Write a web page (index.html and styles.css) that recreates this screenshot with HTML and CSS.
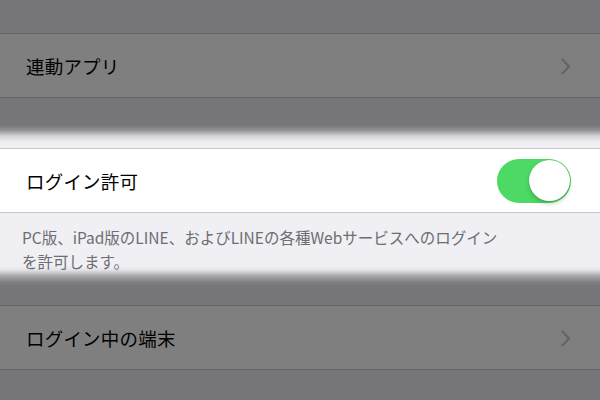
FILE: index.html
```html
<!DOCTYPE html>
<html lang="ja">
<head>
  <meta charset="UTF-8">
  <meta name="viewport" content="width=device-width, initial-scale=1.0">
  <title>ログイン許可</title>
  <link rel="stylesheet" href="styles.css">
</head>
<body>
  <div id="settings">
    <div class="gap top"></div>
    <div class="row">
      <div class="label">連動アプリ</div>
      <svg class="chevron" width="10" height="17" viewBox="0 0 10 17">
        <path d="M1.5 1.5 L8 8.5 L1.5 15.5" fill="none" stroke="#c7c7cc" stroke-width="2.2" stroke-linecap="round" stroke-linejoin="round"/>
      </svg>
    </div>
    <div class="gap mid"></div>
    <div class="row">
      <div class="label">ログイン許可</div>
      <div class="toggle on"><div class="knob"></div></div>
    </div>
    <div class="footer">PC版、iPad版のLINE、およびLINEの各種Webサービスへのログイン<br>を許可します。</div>
    <div class="row">
      <div class="label">ログイン中の端末</div>
      <svg class="chevron" width="10" height="17" viewBox="0 0 10 17">
        <path d="M1.5 1.5 L8 8.5 L1.5 15.5" fill="none" stroke="#c7c7cc" stroke-width="2.2" stroke-linecap="round" stroke-linejoin="round"/>
      </svg>
    </div>
    <div class="gap bottom"></div>
    <div id="shade"></div>
  </div>
</body>
</html>
```

FILE: styles.css
```css
*{
  margin: 0px;
  padding: 0px;
  box-sizing: border-box;
}
body{
  width: 600px;
  height: 400px;
  overflow: hidden;
  background-color: #efeff4;
  font-family: "Noto Sans CJK JP", "Noto Sans", sans-serif;
}
#settings{
  position: relative;
  width: 600px;
  height: 400px;
  display: flex;
  flex-direction: column;
}
.gap.top{
  height: 33px;
  flex: none;
}
.gap.mid{
  height: 50px;
  flex: none;
}
.gap.bottom{
  flex: 1;
}
.row{
  height: 65px;
  flex: none;
  background-color: #fff;
  border-top: 1px #c8c7cc solid;
  border-bottom: 1px #c8c7cc solid;
  display: flex;
  align-items: center;
  justify-content: space-between;
  padding: 0px 29px 0px 26px;
}
.label{
  font-size: 18.5px;
  color: #000;
  letter-spacing: 0.2px;
}
.chevron{
  margin-top: 1px;
}
.toggle{
  width: 74px;
  height: 44px;
  border-radius: 22px;
  background-color: #e5e5ea;
  position: relative;
}
.toggle.on{
  background-color: #4cd964;
}
.knob{
  position: absolute;
  top: 1.5px;
  right: 1.5px;
  width: 41px;
  height: 41px;
  border-radius: 50%;
  background-color: #fff;
  box-shadow: 0px 3px 4px rgba(0,0,0,0.18), 0px 0px 1px rgba(0,0,0,0.2);
}
.footer{
  height: 92px;
  flex: none;
  padding: 12px 20px 0px 22px;
  font-size: 15.5px;
  line-height: 24px;
  color: #6d6d72;
}
#shade{
  position: absolute;
  top: 0px;
  left: 0px;
  width: 100%;
  height: 100%;
  pointer-events: none;
  background: linear-gradient(to bottom,
    rgba(0,0,0,0.5) 0px,
    rgba(0,0,0,0.5) 125px,
    rgba(0,0,0,0.4) 130px,
    rgba(0,0,0,0.12) 136px,
    rgba(0,0,0,0.02) 141px,
    rgba(0,0,0,0) 144px,
    rgba(0,0,0,0) 266px,
    rgba(0,0,0,0.05) 270px,
    rgba(0,0,0,0.3) 276px,
    rgba(0,0,0,0.46) 282px,
    rgba(0,0,0,0.5) 286px,
    rgba(0,0,0,0.5) 400px);
}
```
